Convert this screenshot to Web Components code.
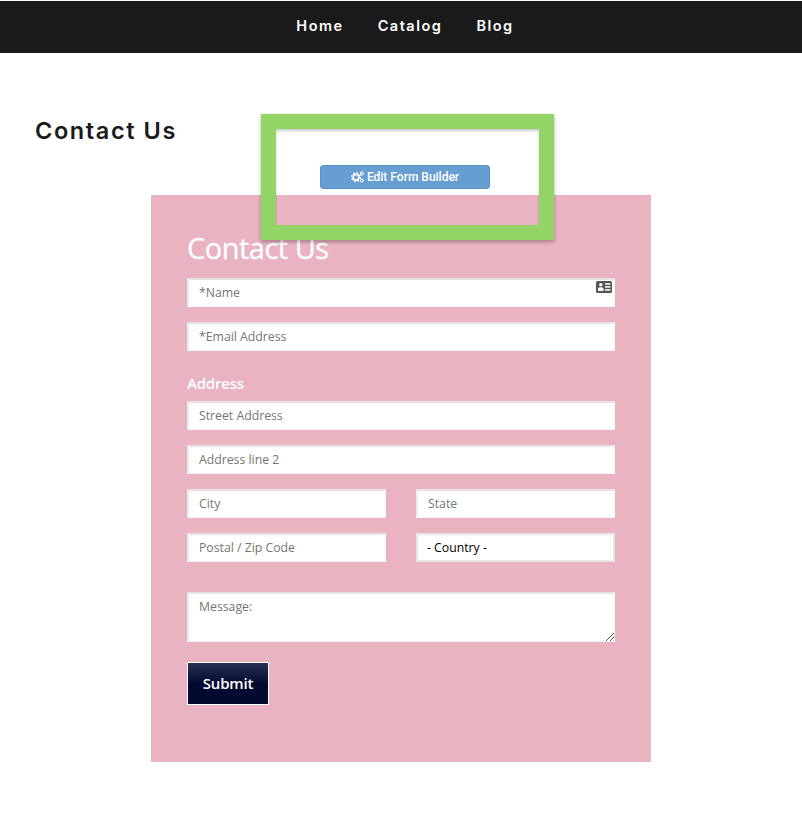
<!DOCTYPE html>
<html lang="en"><head><meta charset="utf-8"><title>Contact Us</title>
<style>
html,body{margin:0;padding:0;background:#fff}
body{font-family:"Open Sans",sans-serif;position:relative;height:822px;overflow:hidden}
</style></head><body>
<site-header><a>Home</a><a>Catalog</a><a>Blog</a></site-header>
<page-title>Contact Us</page-title>
<contact-form>
  <span slot="heading">Contact Us</span>
  <form-row><form-field icon>*Name</form-field></form-row>
  <form-row><form-field>*Email Address</form-field></form-row>
  <form-label>Address</form-label>
  <form-row><form-field>Street Address</form-field></form-row>
  <form-row><form-field>Address line 2</form-field></form-row>
  <form-row><form-field>City</form-field><form-field>State</form-field></form-row>
  <form-row><form-field>Postal / Zip Code</form-field><form-field select>- Country -</form-field></form-row>
  <form-row style="margin-top:30px"><form-field area>Message:</form-field></form-row>
  <submit-button>Submit</submit-button>
</contact-form>
<builder-overlay>Edit Form Builder</builder-overlay>
<script>
function def(name,html){customElements.define(name,class extends HTMLElement{constructor(){super();this.attachShadow({mode:'open'}).innerHTML=html}})}
def('site-header',`<style>:host{display:block;height:52px;margin-top:1px;background:#1a1a1a}
div{display:flex;justify-content:center;gap:34px;align-items:center;height:100%;padding:0 0 1px 8px;box-sizing:border-box}
::slotted(a){font:600 14.500px/1 "Inter",sans-serif;letter-spacing:1.500px;color:#fff}</style><div><slot></slot></div>`);
def('page-title',`<style>:host{display:block;margin:63px 0 0 35px;height:79px;font:600 23.500px/30px "Inter",sans-serif;letter-spacing:1.600px;color:#1a1a1a}</style><slot></slot>`);
def('contact-form',`<style>:host{display:block;box-sizing:border-box;width:500px;height:567px;margin-left:151px;background:#e9b3c1;padding:35px 36px 0 36px;color:#fff}
h2{margin:0 0 12px;font:400 29px/36px "Open Sans",sans-serif;letter-spacing:-.5px;color:#fff;-webkit-text-stroke:.3px #fff}
</style><h2><slot name="heading"></slot></h2><slot></slot>`);
def('form-row',`<style>:host{display:flex;gap:30px;margin-bottom:15px}</style><slot></slot>`);
def('form-label',`<style>:host{display:block;margin:0 0 8px;padding-top:7px;font:600 15px/20px "Open Sans",sans-serif;letter-spacing:-.2px;color:#fff}</style><slot></slot>`);
customElements.define('form-field',class extends HTMLElement{constructor(){super();const s=this.attachShadow({mode:'open'});
const icon=this.hasAttribute('icon')?`<svg class="ic" width="16" height="12" viewBox="0 0 16 12"><rect width="16" height="12" rx="1.500" fill="#555"/><rect x="9" y="2.200" width="5.500" height="1.500" fill="#fff"/><rect x="9" y="5.200" width="5.500" height="1.500" fill="#fff"/><rect x="9" y="8.200" width="5.500" height="1.500" fill="#fff"/><circle cx="4.800" cy="3.800" r="1.700" fill="#fff"/><path d="M2 10V7.800C2 6.800 3 6.200 4.800 6.200S7.600 6.800 7.600 7.800V10Z" fill="#fff"/></svg>`:'';
const grip=this.hasAttribute('area')?`<svg class="grip" width="8" height="8" viewBox="0 0 8 8"><path d="M0 8 8 0M4 8 8 4" stroke="#555" stroke-width="1" fill="none"/></svg>`:'';
s.innerHTML=`<style>:host{display:flex;flex:1 1 0;min-width:0;position:relative;box-sizing:border-box;height:29px;background:#fff;border:solid #e4e4e4;border-width:2px 1px 1px 2px;border-right-color:#f6f6f6;border-bottom-color:#f6f6f6;border-left-color:#ececec;padding:0 10px;align-items:center;font:400 12.250px/16px "Open Sans",sans-serif;color:#757575}
:host([area]){height:50px;align-items:flex-start;padding-top:5px;}
:host([select]){border:2px solid #e6e6e6;padding-left:9px;color:#000}
.ic{position:absolute;top:1px;right:2px}.grip{position:absolute;right:0;bottom:0}</style><slot></slot>${icon}${grip}`}});
def('submit-button',`<style>:host{display:flex;box-sizing:border-box;width:82px;height:43px;margin-top:20px;padding-bottom:2px;align-items:center;justify-content:center;border:1px solid #fff;background:linear-gradient(#2a3154,#020a30 50%);font:600 15px/20px "Open Sans",sans-serif;letter-spacing:-.15px;color:#fff}</style><slot></slot>`);
def('builder-overlay',`<style>:host{position:absolute;left:261px;top:114px;box-sizing:border-box;width:293px;height:126px;border:15px solid #92d466;box-shadow:0 2px 4px rgba(0,0,0,.3),inset 0 2px 3px rgba(0,0,0,.2);display:block}
div{position:absolute;left:44px;top:36px;box-sizing:border-box;width:170px;height:24px;background:#669ed2;border:1px solid #5a92c6;border-radius:3px;display:flex;align-items:center;justify-content:center;gap:3px;font:500 12px/16px Roboto,sans-serif;color:#fff}
svg{display:block}</style><div><svg width="13" height="12" viewBox="0 0 13 12" fill="none" stroke="#fff"><circle cx="5" cy="6.200" r="2.900" stroke-width="1.700"/><circle cx="5" cy="6.200" r="4.400" stroke-width="1.300" stroke-dasharray="1.700 1.755"/><circle cx="10.900" cy="2.500" r="1.400" stroke-width="1.100"/><circle cx="10.900" cy="9.500" r="1.400" stroke-width="1.100"/></svg><slot></slot></div>`);
</script>
</body></html>
